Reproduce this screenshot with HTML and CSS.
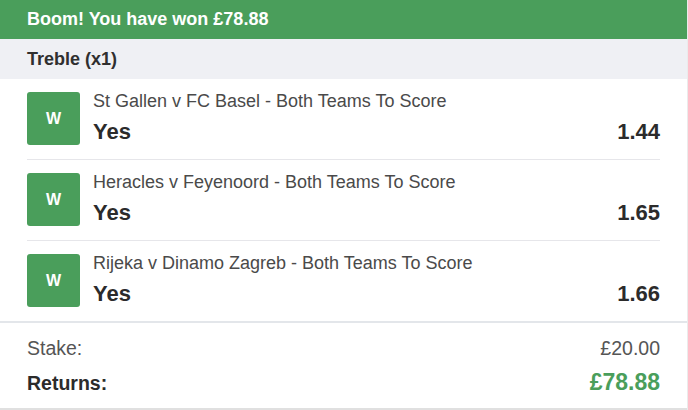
FILE: index.html
```html
<!DOCTYPE html>
<html lang="en">
<head>
  <meta charset="UTF-8">
  <title>Bet Receipt</title>
  <link rel="stylesheet" href="styles.css">
</head>
<body>
<div class="bet-card">
  <div class="bet-banner">Boom! You have won £78.88</div>
  <div class="bet-type">Treble (x1)</div>

  <div class="selections">
    <div class="selection">
      <div class="result">W</div>
      <div class="sel-info">
        <div class="market">St Gallen v FC Basel - Both Teams To Score</div>
        <div class="pick">
          <span>Yes</span>
          <span>1.44</span>
        </div>
      </div>
    </div>

    <div class="selection">
      <div class="result">W</div>
      <div class="sel-info">
        <div class="market">Heracles v Feyenoord - Both Teams To Score</div>
        <div class="pick">
          <span>Yes</span>
          <span>1.65</span>
        </div>
      </div>
    </div>

    <div class="selection">
      <div class="result">W</div>
      <div class="sel-info">
        <div class="market">Rijeka v Dinamo Zagreb - Both Teams To Score</div>
        <div class="pick">
          <span>Yes</span>
          <span>1.66</span>
        </div>
      </div>
    </div>
  </div>

  <div class="totals">
    <div class="stake">
      <span>Stake:</span>
      <span>£20.00</span>
    </div>
    <div class="returns">
      <span>Returns:</span>
      <span class="returns-value">£78.88</span>
    </div>
  </div>
</div>
</body>
</html>
```

FILE: styles.css
```css
body {
  margin: 0;
  font-family: 'Liberation Sans', Arial, sans-serif;
  background-color: #fff;
  color: #333;
}

.bet-card {
  width: 687px;
  border-right: 1px solid #ebebeb;
}

.bet-banner {
  background-color: #4a9e5b;
  color: #fff;
  font-size: 18px;
  font-weight: bold;
  height: 39px;
  line-height: 39px;
  padding-left: 27px;
}

.bet-type {
  background-color: #eff0f4;
  color: #2f2f2f;
  font-size: 18px;
  font-weight: bold;
  height: 40px;
  line-height: 40px;
  padding-left: 27px;
}

.selection {
  display: flex;
  gap: 13px;
  margin: 0 27px;
  padding: 13px 0 14px;
  border-bottom: 1px solid #e6e6ea;
}

.selection:last-child {
  border-bottom: none;
  padding-bottom: 14px;
}

.result {
  width: 53px;
  height: 53px;
  flex-shrink: 0;
  border-radius: 3px;
  background-color: #4a9e5b;
  color: #fff;
  font-size: 16px;
  font-weight: bold;
  display: flex;
  align-items: center;
  justify-content: center;
}

.sel-info {
  flex: 1;
}

.market {
  font-size: 18px;
  line-height: 18px;
  color: #4a4a4a;
}

.pick {
  display: flex;
  justify-content: space-between;
  margin-top: 11px;
  font-size: 22px;
  line-height: 22px;
  font-weight: bold;
  color: #2b2b2b;
}

.totals {
  border-top: 2px solid #e3e6ea;
  border-bottom: 2px solid #e0e0e0;
  padding: 13px 27px 11px;
}

.stake {
  display: flex;
  justify-content: space-between;
  font-size: 19.5px;
  line-height: 24px;
  color: #555;
}

.returns {
  display: flex;
  justify-content: space-between;
  align-items: baseline;
  margin-top: 8px;
  font-size: 19.5px;
  line-height: 28px;
  font-weight: bold;
  color: #2b2b2b;
}

.returns-value {
  font-size: 23px;
  color: #4a9e5b;
}
```
